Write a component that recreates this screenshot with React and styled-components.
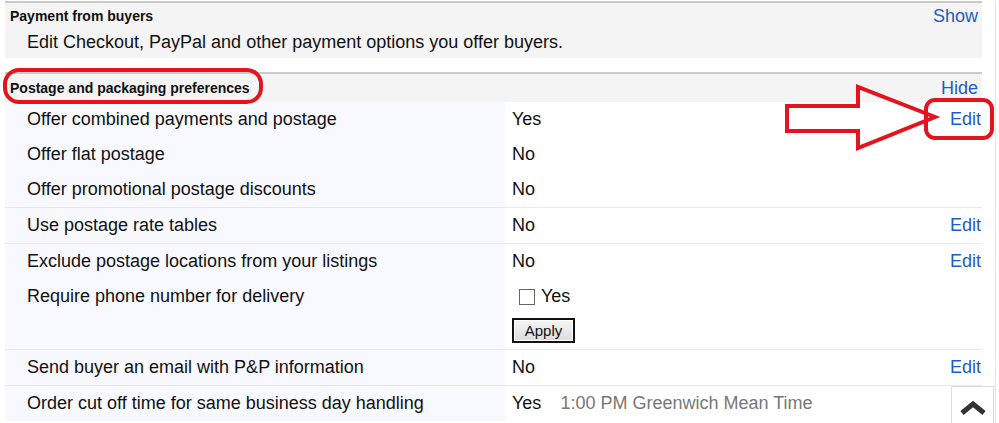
import React from "react";
import styled, { createGlobalStyle } from "styled-components";

const Global = createGlobalStyle`
  html, body { margin: 0; padding: 0; background: #fff; }
  body { font-family: "Liberation Sans", Arial, sans-serif; color: #111; }
`;

const Page = styled.div`
  position: relative;
  width: 999px;
  height: 423px;
  overflow: hidden;
  display: flex;
  padding-top: 1px;
  box-sizing: border-box;
`;

const Content = styled.div`
  margin-left: 5px;
  width: 977px;
  display: flex;
  flex-direction: column;
`;

const Gutter = styled.div`
  margin-left: 13px;
  width: 1px;
  background: #e4e4e4;
`;

const Section = styled.section`
  border-top: 2px solid #cacaca;
  margin-top: ${(p) => p.$gap || 0}px;
`;

const SectionHeader = styled.div`
  display: flex;
  align-items: center;
  justify-content: space-between;
  height: ${(p) => p.$h}px;
  padding: 0 4px 0 5px;
  background: #f4f4f4;
`;

const Title = styled.h3`
  margin: 0;
  font-size: 14px;
  font-weight: bold;
  color: #111;
`;

const Toggle = styled.a`
  font-size: 18px;
  color: #1f5cc4;
  text-decoration: none;
  cursor: pointer;
`;

const Description = styled.div`
  background: #f4f4f4;
  height: 26px;
  padding: 0 0 3px 22px;
  display: flex;
  align-items: center;
  font-size: 18px;
`;

const Group = styled.div`
  border-top: ${(p) => (p.$first ? "none" : "1px solid #e9e9e9")};
`;

const Row = styled.div`
  display: grid;
  grid-template-columns: 500px 1fr;
  font-size: 18px;
`;

const Label = styled.div`
  background: #f8f8ff;
  padding: 7px 0 0 22px;
  min-height: 28px;
  line-height: 21px;
  box-sizing: border-box;
  height: ${(p) => (p.$tall ? "auto" : "35px")};
`;

const ValueCell = styled.div`
  display: flex;
  flex-direction: ${(p) => (p.$stack ? "column" : "row")};
  align-items: ${(p) => (p.$stack ? "flex-start" : "center")};
  justify-content: space-between;
  padding: ${(p) => (p.$stack ? "7px 1px 6px 7px" : "0 1px 0 7px")};
  height: ${(p) => (p.$stack ? "auto" : "35px")};
  box-sizing: border-box;
  line-height: 21px;
`;

const Value = styled.span`
  display: flex;
  align-items: center;
  gap: 19px;
`;

const Muted = styled.span`
  color: #777;
`;

const EditLink = styled.a`
  color: #1f5cc4;
  text-decoration: none;
  cursor: pointer;
`;

const CheckLabel = styled.label`
  display: flex;
  align-items: center;
  gap: 6px;
  margin-left: 7px;
`;

const Box = styled.span`
  width: 14px;
  height: 14px;
  border: 1px solid #666;
  background: #fff;
  display: inline-block;
`;

const ApplyButton = styled.button`
  margin-top: 11px;
  width: 63px;
  height: 25px;
  border: 2px solid #111;
  background: linear-gradient(#f6f6f6, #dcdcdc);
  font-family: "Liberation Sans", Arial, sans-serif;
  font-size: 15px;
  color: #111;
  padding: 0;
  box-shadow: inset 0 0 0 1px #fff;
`;

const ScrollTop = styled.button`
  position: absolute;
  right: 5px;
  bottom: -1px;
  width: 43px;
  height: 38px;
  background: #fff;
  border: 1px solid #dcdcdc;
  display: flex;
  align-items: center;
  justify-content: center;
  padding: 6px 0 0;
`;

const Overlay = styled.svg`
  position: absolute;
  left: 0;
  top: 0;
  pointer-events: none;
`;

const SimpleRow = ({ label, children, edit }) => (
  <Row>
    <Label>{label}</Label>
    <ValueCell>
      <Value>{children}</Value>
      {edit && <EditLink>Edit</EditLink>}
    </ValueCell>
  </Row>
);

export default function App() {
  return (
    <>
      <Global />
      <Page>
        <Content>
          <Section>
            <SectionHeader $h={26}>
              <Title>Payment from buyers</Title>
              <Toggle>Show</Toggle>
            </SectionHeader>
            <Description>Edit Checkout, PayPal and other payment options you offer buyers.</Description>
          </Section>
          <Section $gap={14}>
            <SectionHeader $h={28}>
              <Title>Postage and packaging preferences</Title>
              <Toggle>Hide</Toggle>
            </SectionHeader>
            <Group $first>
              <SimpleRow label="Offer combined payments and postage" edit>Yes</SimpleRow>
              <SimpleRow label="Offer flat postage">No</SimpleRow>
              <SimpleRow label="Offer promotional postage discounts">No</SimpleRow>
            </Group>
            <Group>
              <SimpleRow label="Use postage rate tables" edit>No</SimpleRow>
            </Group>
            <Group>
              <SimpleRow label="Exclude postage locations from your listings" edit>No</SimpleRow>
              <Row>
                <Label $tall>Require phone number for delivery</Label>
                <ValueCell $stack>
                  <CheckLabel>
                    <Box />
                    Yes
                  </CheckLabel>
                  <ApplyButton>Apply</ApplyButton>
                </ValueCell>
              </Row>
            </Group>
            <Group>
              <SimpleRow label="Send buyer an email with P&P information" edit>No</SimpleRow>
            </Group>
            <Group>
              <SimpleRow label="Order cut off time for same business day handling">
                Yes<Muted>1:00 PM Greenwich Mean Time</Muted>
              </SimpleRow>
            </Group>
          </Section>
        </Content>
        <Gutter />
        <ScrollTop aria-label="Back to top">
          <svg width="28" height="16" viewBox="0 0 28 16">
            <path d="M3 13 L14 4 L25 13" fill="none" stroke="#333" strokeWidth="5" strokeLinejoin="miter" />
          </svg>
        </ScrollTop>
        <Overlay width="999" height="423" viewBox="0 0 999 423">
          <rect x="5" y="70" width="256" height="32" rx="14" fill="none" stroke="#e3141e" strokeWidth="4" />
          <polygon
            points="787,106 858,106 858,87 935,117 858,148 858,131 787,131"
            fill="none"
            stroke="#e3141e"
            strokeWidth="4"
            strokeLinejoin="miter"
          />
          <rect x="926" y="100" width="66" height="38" rx="9" fill="none" stroke="#e3141e" strokeWidth="4" />
        </Overlay>
      </Page>
    </>
  );
}
